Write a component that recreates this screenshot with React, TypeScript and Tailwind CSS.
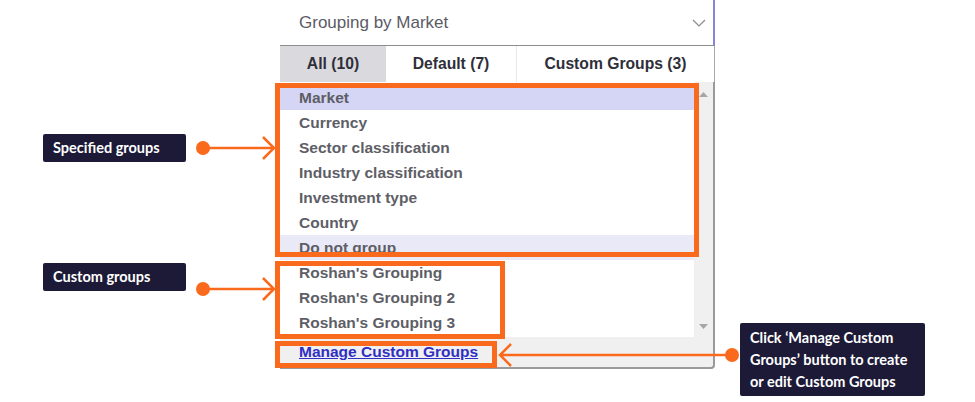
// Grouping dropdown with annotation callouts

import React from 'react';

const specifiedGroups = [
  'Market',
  'Currency',
  'Sector classification',
  'Industry classification',
  'Investment type',
  'Country',
  'Do not group',
];

const customGroups = ["Roshan's Grouping", "Roshan's Grouping 2", "Roshan's Grouping 3"];

// Dark label used for the annotations
function Callout({ className, children }: { className: string; children: React.ReactNode }) {
  return (
    <div
      className={`absolute bg-[#1d1a37] text-white text-[14.5px] font-bold font-['Lato',sans-serif] rounded-[2px] ${className}`}
    >
      {children}
    </div>
  );
}

export default function App() {
  return (
    <div className="relative w-[975px] h-[402px] bg-white overflow-hidden font-['Liberation_Sans',Arial,sans-serif]">
      {/* Dropdown panel */}
      <div className="ml-[280px] w-[435px]">
        {/* Select */}
        <div className="h-[46px] flex items-center justify-between pl-[19px] pr-[7px] border-r-2 border-r-[#8585d9] border-b border-b-[#8c8c8c]">
          <span className="text-[17px] text-[#5b5b66]">Grouping by Market</span>
          <svg width="14" height="8" viewBox="0 0 14 8" fill="none">
            <path d="M1 1l6 6 6-6" stroke="#8a8a8a" strokeWidth="1.2" />
          </svg>
        </div>

        {/* Tabs */}
        <div className="flex h-[36px] border-r border-r-[#a8a8a8] text-[15.7px] font-bold text-[#2f2f3a]">
          <div className="w-[106px] bg-[#dadade] flex items-center justify-center">All (10)</div>
          <div className="w-[131px] border-r border-r-[#e8e8e8] flex items-center justify-center">Default (7)</div>
          <div className="flex-1 flex items-center justify-center">Custom Groups (3)</div>
        </div>

        {/* List + scrollbar */}
        <div className="bg-[#f0f0f0] border-r-2 border-b-2 border-[#9a9a9a] rounded-br-[4px]">
          <div className="flex h-[255px]">
            <div className="w-[414px] bg-white pt-[3px] text-[15.5px] font-bold text-[#5e5e66]">
              {specifiedGroups.map((g, i) => (
                <div
                  key={g}
                  className={`h-[25px] pl-[19px] flex items-center ${
                    i === 0 ? 'bg-[#d5d6f5]' : i === 6 ? 'bg-[#e9e9f8]' : ''
                  }`}
                >
                  {g}
                </div>
              ))}
              {customGroups.map((g) => (
                <div key={g} className="h-[25px] pl-[19px] flex items-center">
                  {g}
                </div>
              ))}
            </div>
            <div className="flex-1 flex flex-col items-center justify-between pt-[10px] pb-[8px]">
              <svg width="9" height="5" viewBox="0 0 9 5">
                <path d="M0 5L4.5 0 9 5z" fill="#a6a6a6" />
              </svg>
              <svg width="9" height="5" viewBox="0 0 9 5">
                <path d="M0 0L4.5 5 9 0z" fill="#a6a6a6" />
              </svg>
            </div>
          </div>
          <div className="h-[30px] pl-[19px] flex items-center">
            <a href="#" className="text-[15.5px] font-bold text-[#2f2fc4] underline">
              Manage Custom Groups
            </a>
          </div>
        </div>
      </div>

      {/* Orange highlight frames */}
      <div className="absolute left-[275px] top-[83px] w-[424px] h-[174px] border-[5px] border-[#fa6a1c]" />
      <div className="absolute left-[275px] top-[261px] w-[230px] h-[78px] border-[5px] border-[#fa6a1c]" />
      <div className="absolute left-[275px] top-[341px] w-[222px] h-[27px] border-[5px] border-[#fa6a1c]" />

      {/* Arrows */}
      <svg className="absolute left-0 top-0 pointer-events-none" width="975" height="402" fill="none">
        <circle cx="203" cy="148" r="7" fill="#fa6a1c" />
        <path d="M203 148H273M263 137l11 11-11 11" stroke="#fa6a1c" strokeWidth="2.5" />
        <circle cx="203" cy="289" r="7" fill="#fa6a1c" />
        <path d="M203 289H273M263 278l11 11-11 11" stroke="#fa6a1c" strokeWidth="2.5" />
        <circle cx="732" cy="355" r="7" fill="#fa6a1c" />
        <path d="M732 355H501M511 344l-11 11 11 11" stroke="#fa6a1c" strokeWidth="2.5" />
      </svg>

      {/* Callouts */}
      <Callout className="left-[43px] top-[134px] w-[143px] h-[28px] flex items-center pl-[10px]">
        Specified groups
      </Callout>
      <Callout className="left-[43px] top-[263px] w-[143px] h-[28px] flex items-center pl-[10px]">
        Custom groups
      </Callout>
      <Callout className="left-[740px] top-[323px] w-[185px] h-[73px] px-[10px] py-[4px] leading-[22px]">
        Click ‘Manage Custom
        <br />
        Groups’ button to create
        <br />
        or edit Custom Groups
      </Callout>
    </div>
  );
}
